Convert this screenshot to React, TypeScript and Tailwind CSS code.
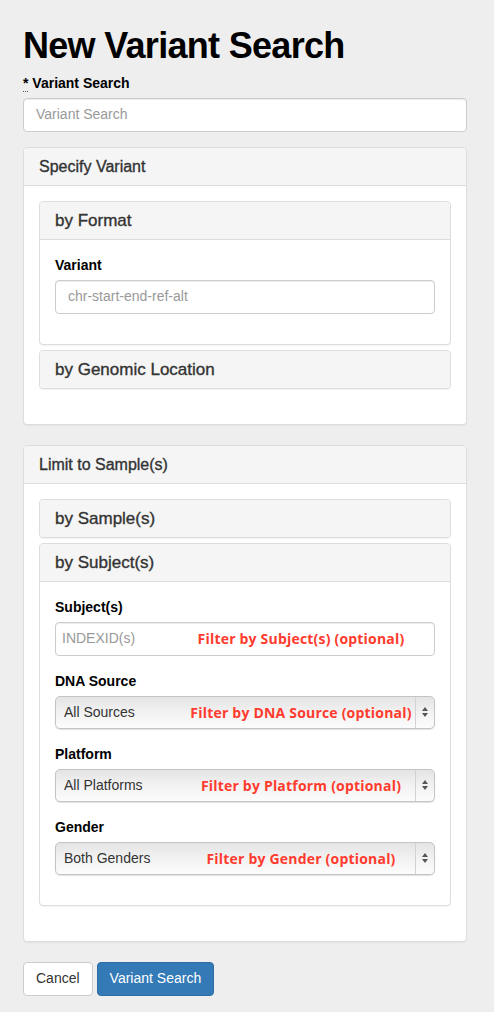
import React from "react";

const font = { fontFamily: '"Liberation Sans", Arial, sans-serif' };

function Note({ text }: { text: string }) {
  return (
    <span className="pointer-events-none absolute inset-y-0 left-[120px] right-[8px] flex items-center justify-center font-['Open_Sans',sans-serif] text-[14px] font-bold tracking-[0.2px] text-[#ff3b2e]">
      {text}
    </span>
  );
}

function Arrows() {
  return (
    <svg width="8" height="12" viewBox="0 0 8 12" className="text-[#555]">
      <path d="M4 1 L7 5 L1 5 Z" fill="currentColor" />
      <path d="M4 11 L7 7 L1 7 Z" fill="currentColor" />
    </svg>
  );
}

function FakeSelect({ value, note }: { value: string; note: string }) {
  return (
    <div className="relative mt-[1px] mb-[3px] flex h-[33px] items-stretch rounded-[5px] border border-[#c4c4c4] bg-gradient-to-b from-[#e4e4e4] via-[#f2f2f2] to-[#fcfcfc] shadow-[0_1px_1px_rgba(0,0,0,0.12)]">
      <span className="flex flex-1 items-center pl-[8px] text-[14px] text-[#333]">{value}</span>
      <span className="flex w-[19px] items-center justify-center border-l border-[#d2d2d2]">
        <Arrows />
      </span>
      <Note text={note} />
    </div>
  );
}

function Label({ children }: { children: React.ReactNode }) {
  return <label className="mb-[5px] block text-[14px] font-bold leading-[20px] text-black">{children}</label>;
}

function Field({ children }: { children: React.ReactNode }) {
  return <div className="mb-[15px]">{children}</div>;
}

const titleStroke = "[-webkit-text-stroke:0.35px_#333]";

function Outer({ title, children }: { title: string; children: React.ReactNode }) {
  return (
    <div className="mb-[20px] rounded-[4px] border border-[#dddddd] bg-white shadow-[0_1px_1px_rgba(0,0,0,0.05)]">
      <div className="rounded-t-[3px] border-b border-[#dddddd] bg-[#f5f5f5] px-[15px] py-[10px]">
        <h3 className={"text-[16px] leading-[17px] text-[#333] " + titleStroke}>{title}</h3>
      </div>
      <div className="p-[15px]">{children}</div>
    </div>
  );
}

function Inner({ title, children }: { title: string; children?: React.ReactNode }) {
  return (
    <div className="rounded-[4px] border border-[#dddddd] bg-white shadow-[0_1px_1px_rgba(0,0,0,0.05)]">
      <div
        className={
          "bg-[#f5f5f5] px-[15px] py-[10px] " +
          (children ? "rounded-t-[3px] border-b border-[#dddddd]" : "rounded-[3px]")
        }
      >
        <h4 className={"text-[17px] leading-[17px] text-[#333] " + titleStroke}>{title}</h4>
      </div>
      {children && <div className="p-[15px]">{children}</div>}
    </div>
  );
}

export default function App() {
  return (
    <div className="min-h-[1012px] bg-[#eeeeee] pl-[23px] pr-[27px] pt-[26px] pb-[14px] text-black" style={font}>
      <h1 className="mb-[7px] text-[36px] font-bold leading-[39.6px] tracking-[-0.7px]">New Variant Search</h1>

      <Field>
        <Label>
          <abbr title="required" className="border-b border-dotted border-[#555] no-underline">
            *
          </abbr>{" "}
          Variant Search
        </Label>
        <div className="flex h-[34px] items-center rounded-[4px] border border-[#cccccc] bg-white px-[12px] text-[14px] text-[#999] shadow-[inset_0_1px_1px_rgba(0,0,0,0.075)]">
          Variant Search
        </div>
      </Field>

      <Outer title="Specify Variant">
        <div className="mb-[20px] flex flex-col gap-[5px]">
          <Inner title="by Format">
            <Field>
              <Label>Variant</Label>
              <div className="flex h-[34px] items-center rounded-[4px] border border-[#cccccc] bg-white px-[12px] text-[14px] text-[#999] shadow-[inset_0_1px_1px_rgba(0,0,0,0.075)]">
                chr-start-end-ref-alt
              </div>
            </Field>
          </Inner>
          <Inner title="by Genomic Location" />
        </div>
      </Outer>

      <Outer title="Limit to Sample(s)">
        <div className="mb-[20px] flex flex-col gap-[5px]">
          <Inner title="by Sample(s)" />
          <Inner title="by Subject(s)">
            <Field>
              <Label>Subject(s)</Label>
              <div className="relative flex h-[34px] items-center rounded-[4px] border border-[#cccccc] bg-white px-[6px] text-[14px] text-[#999] shadow-[inset_0_1px_1px_rgba(0,0,0,0.075)]">
                INDEXID(s)
                <Note text="Filter by Subject(s) (optional)" />
              </div>
            </Field>
            <Field>
              <Label>DNA Source</Label>
              <FakeSelect value="All Sources" note="Filter by DNA Source (optional)" />
            </Field>
            <Field>
              <Label>Platform</Label>
              <FakeSelect value="All Platforms" note="Filter by Platform (optional)" />
            </Field>
            <Field>
              <Label>Gender</Label>
              <FakeSelect value="Both Genders" note="Filter by Gender (optional)" />
            </Field>
          </Inner>
        </div>
      </Outer>

      <div className="flex gap-[4px]">
        <button className="h-[34px] rounded-[4px] border border-[#cccccc] bg-white px-[12px] text-[14px] text-[#333]">
          Cancel
        </button>
        <button className="h-[34px] rounded-[4px] border border-[#2e6da4] bg-[#337ab7] px-[12px] text-[14px] text-white">
          Variant Search
        </button>
      </div>
    </div>
  );
}
